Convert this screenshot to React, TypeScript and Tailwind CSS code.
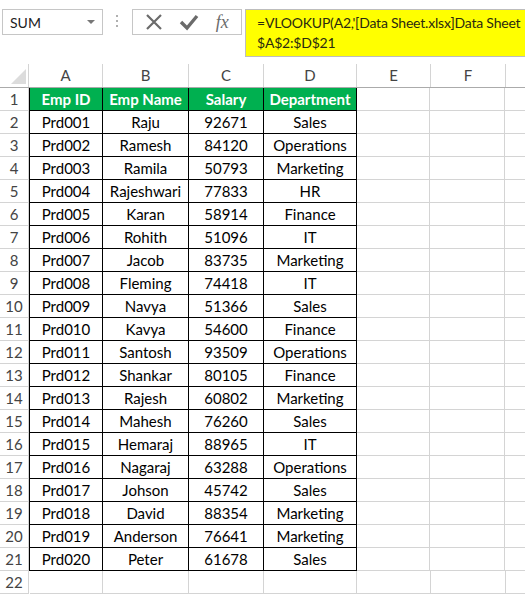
import React from 'react';

const rows = [
  ['Prd001', 'Raju', '92671', 'Sales'],
  ['Prd002', 'Ramesh', '84120', 'Operations'],
  ['Prd003', 'Ramila', '50793', 'Marketing'],
  ['Prd004', 'Rajeshwari', '77833', 'HR'],
  ['Prd005', 'Karan', '58914', 'Finance'],
  ['Prd006', 'Rohith', '51096', 'IT'],
  ['Prd007', 'Jacob', '83735', 'Marketing'],
  ['Prd008', 'Fleming', '74418', 'IT'],
  ['Prd009', 'Navya', '51366', 'Sales'],
  ['Prd010', 'Kavya', '54600', 'Finance'],
  ['Prd011', 'Santosh', '93509', 'Operations'],
  ['Prd012', 'Shankar', '80105', 'Finance'],
  ['Prd013', 'Rajesh', '60802', 'Marketing'],
  ['Prd014', 'Mahesh', '76260', 'Sales'],
  ['Prd015', 'Hemaraj', '88965', 'IT'],
  ['Prd016', 'Nagaraj', '63288', 'Operations'],
  ['Prd017', 'Johson', '45742', 'Sales'],
  ['Prd018', 'David', '88354', 'Marketing'],
  ['Prd019', 'Anderson', '76641', 'Marketing'],
  ['Prd020', 'Peter', '61678', 'Sales'],
];

const headers = ['Emp ID', 'Emp Name', 'Salary', 'Department'];
const widths = ['w-[74px]', 'w-[86px]', 'w-[75px]', 'w-[93px]'];

function RowNum({ n }: { n: number }) {
  return (
    <div className="w-[29px] shrink-0 h-full border-r border-b border-[#d4d4d4] bg-white text-[#444] flex items-center justify-center">
      {n}
    </div>
  );
}

function Empty({ w }: { w: string }) {
  return <div className={`${w} shrink-0 h-full border-r border-b border-[#d4d4d4]`} />;
}

export default function App() {
  return (
    <div className="w-[525px] h-[594px] overflow-hidden bg-white text-[15px] font-['Lato','Liberation_Sans',sans-serif] text-black">
      {/* Formula bar */}
      <div className="h-[64px] flex items-start pt-[9px] bg-white relative">
        <div className="ml-[2px] w-[101px] h-[26px] border border-[#c6c6c6] flex items-center justify-between pl-[7px] pr-[7px] text-[14px] text-[#222]">
          <span>SUM</span>
          <span className="w-0 h-0 border-l-[4px] border-r-[4px] border-t-[4px] border-l-transparent border-r-transparent border-t-[#777]" />
        </div>
        <div className="ml-[13px] mt-[6px] flex flex-col gap-[3px]">
          <span className="w-[2px] h-[2px] bg-[#b0b0b0]" />
          <span className="w-[2px] h-[2px] bg-[#b0b0b0]" />
          <span className="w-[2px] h-[2px] bg-[#b0b0b0]" />
        </div>
        <div className="ml-[14px] w-[110px] h-[26px] border border-[#c6c6c6] flex items-center justify-around px-[4px]">
          <svg width="18" height="18" viewBox="0 0 18 18">
            <path d="M2 2 L16 16 M16 2 L2 16" stroke="#6b6b6b" strokeWidth="2.2" />
          </svg>
          <svg width="20" height="18" viewBox="0 0 20 18">
            <path d="M2 9 L8 15 L18 3" stroke="#6b6b6b" strokeWidth="3.4" fill="none" />
          </svg>
          <span className="font-['Liberation_Serif',serif] italic text-[18px] text-[#6b6b6b] leading-none">
            fx
          </span>
        </div>
        <div className="ml-[3px] flex-1 h-[48px] bg-[#ffff00] border-l border-b border-t border-[#bdbdbd] pl-[11px] pt-[3px] text-[14px] tracking-[-0.2px] leading-[20px] text-[#2a2a10] overflow-hidden whitespace-nowrap">
          <div>=VLOOKUP(A2,'[Data Sheet.xlsx]Data Sheet</div>
          <div>$A$2:$D$21</div>
        </div>
      </div>

      {/* Column headers */}
      <div className="flex h-[24px] border-b border-[#ababab] text-[#444]">
        <div className="w-[29px] shrink-0 border-r border-[#d4d4d4] relative">
          <svg className="absolute right-[2px] bottom-[3px]" width="15" height="15" viewBox="0 0 15 15">
            <path d="M15 0 L15 15 L0 15 Z" fill="#dcdcdc" />
          </svg>
        </div>
        {['A', 'B', 'C', 'D'].map((c, i) => (
          <div key={c} className={`${widths[i]} shrink-0 border-r border-[#d4d4d4] flex items-center justify-center`}>
            {c}
          </div>
        ))}
        <div className="w-[74px] shrink-0 border-r border-[#d4d4d4] flex items-center justify-center">E</div>
        <div className="w-[75px] shrink-0 border-r border-[#d4d4d4] flex items-center justify-center">F</div>
        <div className="flex-1" />
      </div>

      {/* Row 1 */}
      <div className="flex h-[23px]">
        <RowNum n={1} />
        {headers.map((h, i) => (
          <div
            key={h}
            className={`${widths[i]} shrink-0 h-full bg-[#00b050] text-white font-bold border-r border-b border-black ${i === 0 ? 'border-l' : ''} flex items-center justify-center`}
          >
            {h}
          </div>
        ))}
        <Empty w="w-[73px]" />
        <Empty w="w-[75px]" />
        <div className="flex-1 h-full border-b border-[#d4d4d4]" />
      </div>

      {rows.map((r, idx) => (
        <div key={r[0]} className="flex h-[23px]">
          <RowNum n={idx + 2} />
          {r.map((v, i) => (
            <div
              key={i}
              className={`${widths[i]} shrink-0 h-full border-r border-b border-black ${i === 0 ? 'border-l' : ''} flex items-center justify-center`}
            >
              {v}
            </div>
          ))}
          <Empty w="w-[73px]" />
          <Empty w="w-[75px]" />
          <div className="flex-1 h-full border-b border-[#d4d4d4]" />
        </div>
      ))}

      <div className="flex h-[23px]">
        <RowNum n={22} />
        <div className="w-[1px] shrink-0" />
        <Empty w="w-[73px]" />
        <Empty w="w-[86px]" />
        <Empty w="w-[75px]" />
        <Empty w="w-[93px]" />
        <Empty w="w-[74px]" />
        <Empty w="w-[75px]" />
        <div className="flex-1 h-full border-b border-[#d4d4d4]" />
      </div>
    </div>
  );
}
